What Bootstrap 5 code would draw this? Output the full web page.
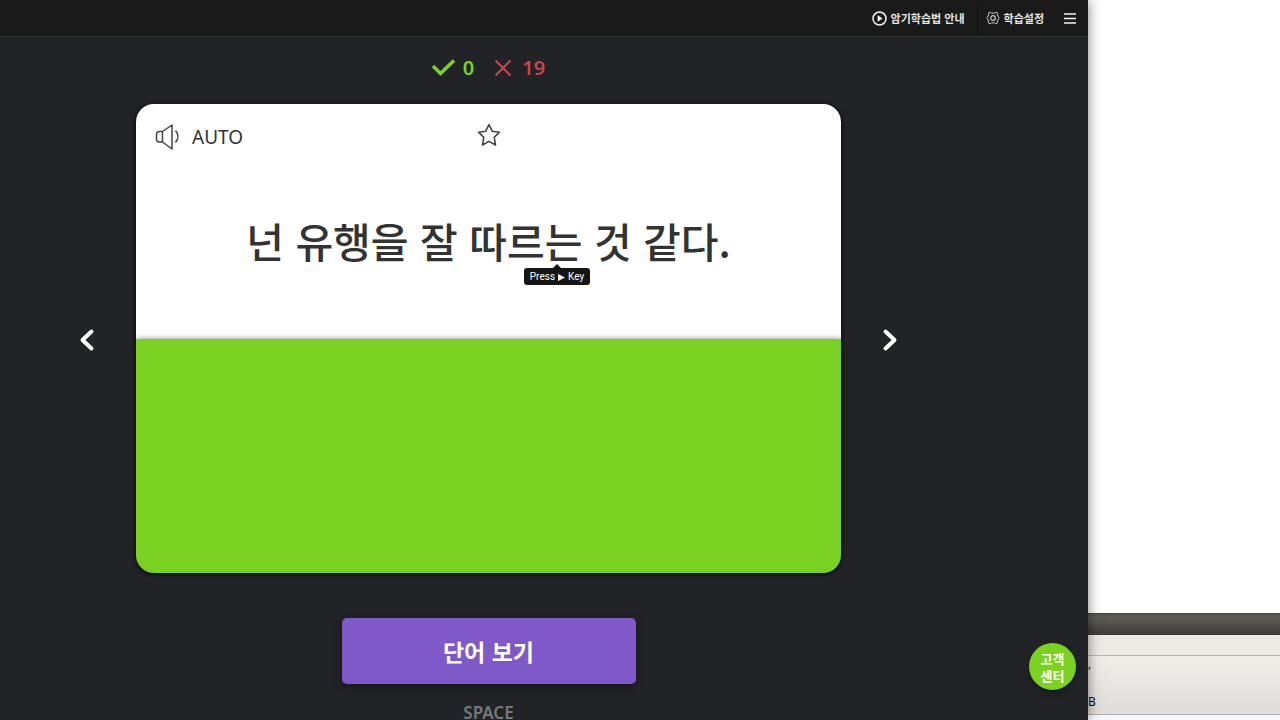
<!DOCTYPE html>
<html lang="ko">
<head>
<meta charset="utf-8">
<meta name="viewport" content="width=device-width, initial-scale=1">
<title>암기학습</title>
<link rel="stylesheet" href="https://cdn.jsdelivr.net/npm/bootstrap@5.3.0/dist/css/bootstrap.min.css">
<style>
  body { font-family: "Noto Sans", "Noto Sans CJK KR", sans-serif; background: #fff; color: #333; }
  .study-window { width: 85%; background: #222327; box-shadow: 0 0 12px rgba(0, 0, 0, .5); z-index: 1; }
  .top-bar { height: 37px; background: #1a1a1a; border-bottom: 1px solid #303236; }
  .top-link { font: 700 11px/16px "Noto Sans CJK KR", sans-serif; color: #e6e6e6; text-decoration: none; }
  .top-link + .top-link { border-left: 1px solid #111; }
  .study-main { padding-right: 111px; }
  .score { font-size: 20px; line-height: 28px; font-weight: 600; padding: 17px 0 22px; }
  .score-ok { color: #7ad024; }
  .score-no { color: #c8484f; }
  .stage { padding: 0 75px; gap: 37px; }
  .arrow-btn { width: 24px; height: 36px; }
  .word-card { border-radius: 18px; overflow: hidden; box-shadow: 0 1px 5px #000; }
  .word-front { height: 235px; background: #fff; }
  .word-back { height: 234px; background: #7ad122; box-shadow: 0 0 5px rgba(0, 0, 0, .5); }
  .auto-btn { left: 19px; top: 17px; font-size: 19px; line-height: 32px; color: #333; gap: 9px; }
  .star-btn { top: 19px; left: 50%; transform: translateX(-50%); }
  .sentence { font: 500 41px/60px "Noto Sans CJK KR", sans-serif; color: #333; padding-top: 106px; }
  .key-tip { left: 388px; top: 164px; width: 66px; gap: 3px; font: 400 10px/17px Roboto, sans-serif; color: #fff; background: #151515; border-radius: 3px; }
  .key-tip::before { content: ""; position: absolute; left: 50%; bottom: 100%; margin-left: -4px; border: 4px solid transparent; border-top: 0; border-bottom-color: #151515; }
  .show-btn { width: 294px; height: 66px; margin-top: 45px; border-radius: 5px; background: #7f59c8; color: #fff; font: 700 23px/36px "Noto Sans CJK KR", sans-serif; box-shadow: 0 3px 8px rgba(0, 0, 0, .35); }
  .key-hint { margin-top: 17px; font-size: 17px; line-height: 24px; font-weight: 600; color: #77787a; }
  .help-btn { right: 12px; bottom: 30px; width: 47px; height: 47px; background: #7ad122; color: #fff; font: 700 13px/17px "Noto Sans CJK KR", sans-serif; box-shadow: 0 3px 6px rgba(0, 0, 0, .35); }
  .desk-title { height: 22px; background: linear-gradient(#56564f, #5d5c56 20%, #3c3b37); border-top: 1px solid #44443f; }
  .desk-menu { height: 21px; background: #edeae6; border-bottom: 1px solid #b9b6b2; }
  .desk-panel { height: 59px; background: linear-gradient(#f1eeea, #dfdcd9); border-bottom: 1px solid #b2afac; font-size: 12px; line-height: 16px; color: #111; }
  .desk-foot { height: 5px; background: #f8f8f8; }
</style>
</head>
<body>
<div class="d-flex vh-100 overflow-hidden">
  <div class="study-window position-relative flex-shrink-0">
    <nav class="top-bar d-flex justify-content-end align-items-center">
      <a href="#" class="top-link d-flex align-items-center py-1 pe-2">
        <svg class="me-1" width="15" height="15" viewBox="0 0 15 15" aria-hidden="true"><circle cx="7.5" cy="7.5" r="6.5" fill="none" stroke="#f2f2f2" stroke-width="1.5"/><path d="M5.7 4.2v6.6l4.8-3.3z" fill="#fff"/></svg>
        <span class="me-1">암기학습법 안내</span>
      </a>
      <a href="#" class="top-link d-flex align-items-center py-2 px-2">
        <svg class="me-1" width="14" height="14" viewBox="0 0 14 14" fill="none" stroke="#d0d0d0" stroke-linejoin="round" aria-hidden="true"><path d="M4.300 1 5.500 2.200h3L9.700 1l2 1.200-.4 1.700 1.400 2.400L13.300 7l-.6.700-1.400 2.400.4 1.700-2 1.200-1.200-1.200h-3L4.300 13l-2-1.200.4-1.700-1.400-2.400L.700 7l.6-.700 1.400-2.400-.4-1.700z"/><circle cx="7" cy="7" r="2.300" stroke-width="1.200"/></svg>
        <span>학습설정</span>
      </a>
      <button type="button" class="btn p-0 border-0 d-flex mx-2 ps-1" aria-label="메뉴">
        <svg width="16" height="12" viewBox="0 0 16 12" fill="none" stroke="#f2f2f2" stroke-width="1.700"><path d="M0 2h12M0 6.500h12M0 11h12"/></svg>
      </button>
    </nav>

    <main class="study-main text-center">
      <div class="score d-flex justify-content-center">
        <span class="score-ok d-flex align-items-center me-3"><svg class="me-2" width="23" height="18" viewBox="0 0 23 18" fill="none" stroke="#7ad024" stroke-width="3.500" aria-hidden="true"><path d="M1 7l7.500 7.500L22 1.500"/></svg>0</span>
        <span class="score-no d-flex align-items-center ms-1"><svg class="me-2" width="20" height="18" viewBox="0 0 20 18" fill="none" stroke="#c8484f" stroke-width="2" aria-hidden="true"><path d="m1.500 1.500 15 15m0-15-15 15"/></svg>19</span>
      </div>

      <div class="stage d-flex align-items-center">
        <button type="button" class="arrow-btn btn p-0 border-0 flex-shrink-0" aria-label="이전">
          <svg width="24" height="28" viewBox="0 0 24 28" fill="none" stroke="#fff" stroke-width="4" stroke-linecap="round" stroke-linejoin="round"><path d="M16.500 6.500 7.500 15l9 8.500"/></svg>
        </button>
        <section class="word-card flex-grow-1">
          <div class="word-front position-relative">
            <button type="button" class="auto-btn btn p-0 border-0 position-absolute d-flex align-items-center">
              <svg width="28" height="28" viewBox="0 0 28 28" fill="none" stroke="#444" stroke-width="1.500" stroke-linejoin="round" aria-hidden="true"><path d="M7.500 8.500H4.500Q1.500 8.500 1.500 11.500v4.500q0 3 3 3h3zM7.500 8.500 17 2v24l-9.500-7zM20.500 7.500q5 6 0 12"/></svg>
              <span>AUTO</span>
            </button>
            <button type="button" class="star-btn btn p-0 border-0 position-absolute d-flex" aria-label="별표">
              <svg width="24" height="24" viewBox="0 0 24 24" fill="none" stroke="#444" stroke-width="1.600" stroke-linejoin="round"><path d="m12 1.500 3.200 6.700 7.300 1-5.300 5.100 1.300 7.700-6.500-3.600L5.500 22l1.300-7.700L1.500 9.200l7.300-1z"/></svg>
            </button>
            <h1 class="sentence m-0">넌 유행을 잘 따르는 것 같다.</h1>
            <div class="key-tip position-absolute d-flex align-items-center justify-content-center" role="tooltip"><span>Press</span><svg width="7" height="8" viewBox="0 0 7 8" aria-hidden="true"><path d="M0 1v7l7-3.500z" fill="#fff"/></svg><span>Key</span></div>
          </div>
          <div class="word-back position-relative"></div>
        </section>
        <button type="button" class="arrow-btn btn p-0 border-0 flex-shrink-0" aria-label="다음">
          <svg width="24" height="28" viewBox="0 0 24 28" fill="none" stroke="#fff" stroke-width="4" stroke-linecap="round" stroke-linejoin="round"><path d="m7.500 6.500 9 8.500-9 8.500"/></svg>
        </button>
      </div>

      <button type="button" class="show-btn btn border-0">단어 보기</button>
      <div class="key-hint">SPACE</div>
    </main>

    <button type="button" class="help-btn btn border-0 rounded-circle p-0 position-absolute">고객<br>센터</button>
  </div>

  <aside class="d-flex flex-column flex-grow-1">
    <div class="flex-grow-1 bg-white"></div>
    <div class="desk-title"></div>
    <div class="desk-menu"></div>
    <div class="desk-panel d-flex flex-column justify-content-between pb-1"><span>,</span><span>B</span></div>
    <div class="desk-foot"></div>
  </aside>
</div>
<script src="https://cdn.jsdelivr.net/npm/bootstrap@5.3.0/dist/js/bootstrap.bundle.min.js"></script>
</body>
</html>
